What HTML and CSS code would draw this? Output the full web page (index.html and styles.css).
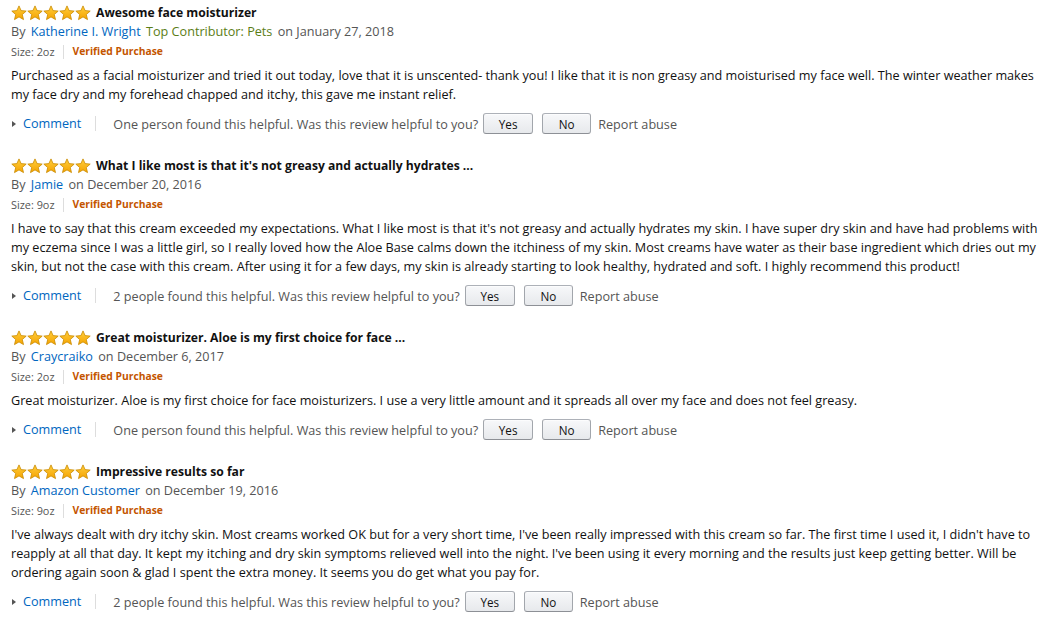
FILE: index.html
```html
<!DOCTYPE html>
<html>
<head>
<meta charset="utf-8">
<link rel="stylesheet" href="styles.css">
</head>
<body>
<svg width="0" height="0" class="defs">
  <defs>
    <linearGradient id="sg" x1="0" y1="0" x2="0" y2="1">
      <stop offset="0" stop-color="#ffce3d"/>
      <stop offset="1" stop-color="#f5a300"/>
    </linearGradient>
    <symbol id="star" viewBox="0 0 16 16">
      <path d="M8 0.9 L10.1 5.6 L15.2 6.1 L11.3 9.5 L12.5 14.6 L8 11.9 L3.5 14.6 L4.7 9.5 L0.8 6.1 L5.9 5.6 Z" fill="url(#sg)" stroke="#c98a00" stroke-width="0.8" stroke-linejoin="round"/>
    </symbol>
  </defs>
</svg>
<div class="reviews">

  <div class="review">
    <div class="head">
      <span class="stars"><svg><use href="#star"/></svg><svg><use href="#star"/></svg><svg><use href="#star"/></svg><svg><use href="#star"/></svg><svg><use href="#star"/></svg></span>
      <span class="title">Awesome face moisturizer</span>
    </div>
    <div class="byline">By <a class="author">Katherine I. Wright</a> <span class="badge">Top Contributor: Pets</span> on January 27, 2018</div>
    <div class="meta"><span class="size">Size: 2oz</span><span class="verified">Verified Purchase</span></div>
    <p class="body">Purchased as a facial moisturizer and tried it out today, love that it is unscented- thank you! I like that it is non greasy and moisturised my face well. The winter weather makes my face dry and my forehead chapped and itchy, this gave me instant relief.</p>
    <div class="actions">
      <span class="comment"><span class="tri"></span>Comment</span>
      <span class="helpful">One person found this helpful. Was this review helpful to you?</span>
      <button class="btn">Yes</button><button class="btn">No</button>
      <span class="report">Report abuse</span>
    </div>
  </div>

  <div class="review">
    <div class="head">
      <span class="stars"><svg><use href="#star"/></svg><svg><use href="#star"/></svg><svg><use href="#star"/></svg><svg><use href="#star"/></svg><svg><use href="#star"/></svg></span>
      <span class="title">What I like most is that it's not greasy and actually hydrates ...</span>
    </div>
    <div class="byline">By <a class="author">Jamie</a> on December 20, 2016</div>
    <div class="meta"><span class="size">Size: 9oz</span><span class="verified">Verified Purchase</span></div>
    <p class="body">I have to say that this cream exceeded my expectations. What I like most is that it's not greasy and actually hydrates my skin. I have super dry skin and have had problems with my eczema since I was a little girl, so I really loved how the Aloe Base calms down the itchiness of my skin. Most creams have water as their base ingredient which dries out my skin, but not the case with this cream. After using it for a few days, my skin is already starting to look healthy, hydrated and soft. I highly recommend this product!</p>
    <div class="actions">
      <span class="comment"><span class="tri"></span>Comment</span>
      <span class="helpful">2 people found this helpful. Was this review helpful to you?</span>
      <button class="btn">Yes</button><button class="btn">No</button>
      <span class="report">Report abuse</span>
    </div>
  </div>

  <div class="review">
    <div class="head">
      <span class="stars"><svg><use href="#star"/></svg><svg><use href="#star"/></svg><svg><use href="#star"/></svg><svg><use href="#star"/></svg><svg><use href="#star"/></svg></span>
      <span class="title">Great moisturizer. Aloe is my first choice for face ...</span>
    </div>
    <div class="byline">By <a class="author">Craycraiko</a> on December 6, 2017</div>
    <div class="meta"><span class="size">Size: 2oz</span><span class="verified">Verified Purchase</span></div>
    <p class="body">Great moisturizer. Aloe is my first choice for face moisturizers. I use a very little amount and it spreads all over my face and does not feel greasy.</p>
    <div class="actions">
      <span class="comment"><span class="tri"></span>Comment</span>
      <span class="helpful">One person found this helpful. Was this review helpful to you?</span>
      <button class="btn">Yes</button><button class="btn">No</button>
      <span class="report">Report abuse</span>
    </div>
  </div>

  <div class="review">
    <div class="head">
      <span class="stars"><svg><use href="#star"/></svg><svg><use href="#star"/></svg><svg><use href="#star"/></svg><svg><use href="#star"/></svg><svg><use href="#star"/></svg></span>
      <span class="title">Impressive results so far</span>
    </div>
    <div class="byline">By <a class="author">Amazon Customer</a> on December 19, 2016</div>
    <div class="meta"><span class="size">Size: 9oz</span><span class="verified">Verified Purchase</span></div>
    <p class="body">I've always dealt with dry itchy skin. Most creams worked OK but for a very short time, I've been really impressed with this cream so far. The first time I used it, I didn't have to reapply at all that day. It kept my itching and dry skin symptoms relieved well into the night. I've been using it every morning and the results just keep getting better. Will be ordering again soon &amp; glad I spent the extra money. It seems you do get what you pay for.</p>
    <div class="actions">
      <span class="comment"><span class="tri"></span>Comment</span>
      <span class="helpful">2 people found this helpful. Was this review helpful to you?</span>
      <button class="btn">Yes</button><button class="btn">No</button>
      <span class="report">Report abuse</span>
    </div>
  </div>

</div>
</body>
</html>
```

FILE: styles.css
```css
html, body {
  margin: 0;
  padding: 0;
  background: #fff;
}
body {
  font-family: "Open Sans", "Liberation Sans", Arial, sans-serif;
  font-size: 12.65px;
  color: #111;
}
.defs {
  position: absolute;
  width: 0;
  height: 0;
}
.reviews {
  padding: 3px 4px 0 11px;
  display: flex;
  flex-direction: column;
  gap: 22px;
}
.review {
  display: flex;
  flex-direction: column;
}
.head {
  display: flex;
  align-items: center;
  height: 19px;
}
.stars {
  display: flex;
  margin-right: 5px;
}
.stars svg {
  width: 16px;
  height: 16px;
  margin-right: 0;
}
.title {
  font-weight: 700;
  font-size: 12.15px;
  color: #111;
}
.byline {
  line-height: 19px;
  color: #555;
}
.author {
  color: #0066c0;
  margin: 0 2px;
}
.badge {
  color: #5b7d16;
  margin-right: 2px;
}
.meta {
  display: flex;
  align-items: center;
  font-size: 10.9px;
  line-height: 21px;
  color: #555;
}
.size {
  padding-right: 8px;
  margin-right: 9px;
  border-right: 1px solid #ddd;
  line-height: 14px;
}
.verified {
  color: #c45500;
  font-weight: 700;
  font-size: 10.3px;
}
.body {
  margin: 4px 0 0;
  line-height: 19px;
}
.actions {
  display: flex;
  align-items: center;
  margin-top: 9px;
  height: 21px;
  color: #555;
}
.comment {
  display: flex;
  align-items: center;
  color: #0066c0;
  padding-right: 14px;
  margin-right: 17px;
  border-right: 1px solid #ddd;
  line-height: 15px;
}
.tri {
  width: 0;
  height: 0;
  border-left: 4px solid #555;
  border-top: 3.5px solid transparent;
  border-bottom: 3.5px solid transparent;
  margin: 0 7px 0 1px;
}
.btn {
  font-family: inherit;
  font-size: 11.7px;
  color: #111;
  height: 21px;
  width: 50px;
  padding: 0;
  margin-left: 5px;
  margin-right: 3px;
  border: 1px solid #adb1b8;
  border-color: #adb1b8 #a2a6ac #8d9096;
  border-radius: 3px;
  background: linear-gradient(to bottom, #f7f8fa, #e7e9ec);
  box-shadow: inset 0 1px 0 rgba(255,255,255,.6);
}
.btn + .btn {
  margin-left: 6px;
  width: 49px;
}
.report {
  margin-left: 4px;
}
```
